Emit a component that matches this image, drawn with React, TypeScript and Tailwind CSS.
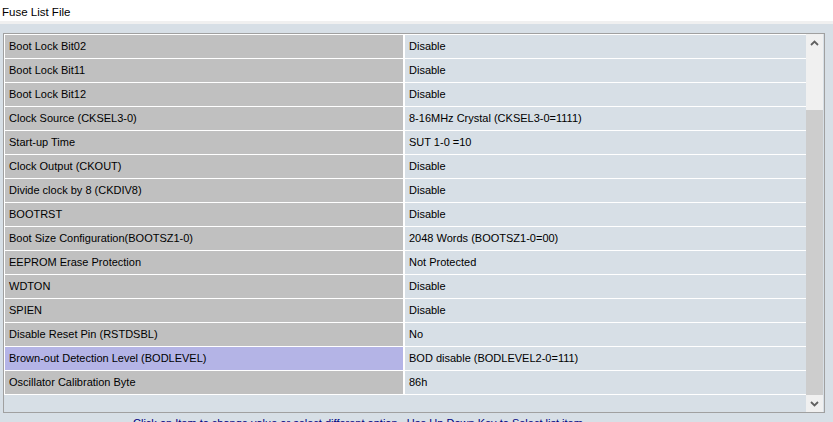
import React from "react";

const rows: [string, string][] = [
  ["Boot Lock Bit02", "Disable"],
  ["Boot Lock Bit11", "Disable"],
  ["Boot Lock Bit12", "Disable"],
  ["Clock Source (CKSEL3-0)", "8-16MHz Crystal (CKSEL3-0=1111)"],
  ["Start-up Time", "SUT 1-0 =10"],
  ["Clock Output (CKOUT)", "Disable"],
  ["Divide clock by 8 (CKDIV8)", "Disable"],
  ["BOOTRST", "Disable"],
  ["Boot Size Configuration(BOOTSZ1-0)", "2048 Words (BOOTSZ1-0=00)"],
  ["EEPROM Erase Protection", "Not Protected"],
  ["WDTON", "Disable"],
  ["SPIEN", "Disable"],
  ["Disable Reset Pin  (RSTDSBL)", "No"],
  ["Brown-out Detection Level (BODLEVEL)", "BOD disable (BODLEVEL2-0=111)"],
  ["Oscillator Calibration Byte", "86h"],
];

const Chevron = ({ up }: { up?: boolean }) => (
  <svg width="9" height="6" viewBox="0 0 9 6">
    <path
      d={up ? "M1 5 L4.5 1.5 L8 5" : "M1 1 L4.5 4.5 L8 1"}
      fill="none"
      stroke="#606060"
      strokeWidth="1.8"
    />
  </svg>
);

export default function App() {
  const selected = 13;
  return (
    <div
      className="w-[833px] h-[422px] overflow-hidden flex flex-col bg-white text-[11px] text-black"
      style={{ fontFamily: '"Liberation Sans", Arial, sans-serif' }}
    >
      <div className="h-[21px] shrink-0 flex items-center pl-[2px] pt-[4px] text-[11.5px]">Fuse List File</div>
      <div className="h-[3px] shrink-0 bg-[#f0f0f0]" />
      <div className="shrink-0 bg-[#d7dfe6] pl-[3px] pt-[9px] h-[400px]">
        <div className="w-[822px] h-[380px] border border-[#a0a0a0] flex">
          <div className="w-[802px] flex flex-col">
            <div className="h-[1px] bg-white" />
            {rows.map(([name, value], i) => (
              <div key={i} className="flex h-[24px] bg-white pl-[1px] pb-[1px] gap-[2px]">
                <div
                  className={`w-[398px] flex items-center pl-[4px] ${
                    i === selected ? "bg-[#b4b4e6]" : "bg-[#c0c0c0]"
                  }`}
                >
                  {name}
                </div>
                <div className="flex-1 flex items-center pl-[4px] bg-[#d7dfe6]">{value}</div>
              </div>
            ))}
          </div>
          <div className="w-[17px] flex flex-col bg-[#f0f0f0]">
            <div className="h-[17px] flex items-center justify-center">
              <Chevron up />
            </div>
            <div className="flex-1 pt-[59px]">
              <div className="h-[285px] bg-[#cdcdcd]" />
            </div>
            <div className="h-[17px] flex items-center justify-center">
              <Chevron />
            </div>
          </div>
        </div>
        <div className="pl-[130px] pt-[3px] text-[#000080] leading-[14px] whitespace-nowrap">
          Click on Item to change value or select different option..  Use Up Down Key to Select list item
        </div>
      </div>
    </div>
  );
}
